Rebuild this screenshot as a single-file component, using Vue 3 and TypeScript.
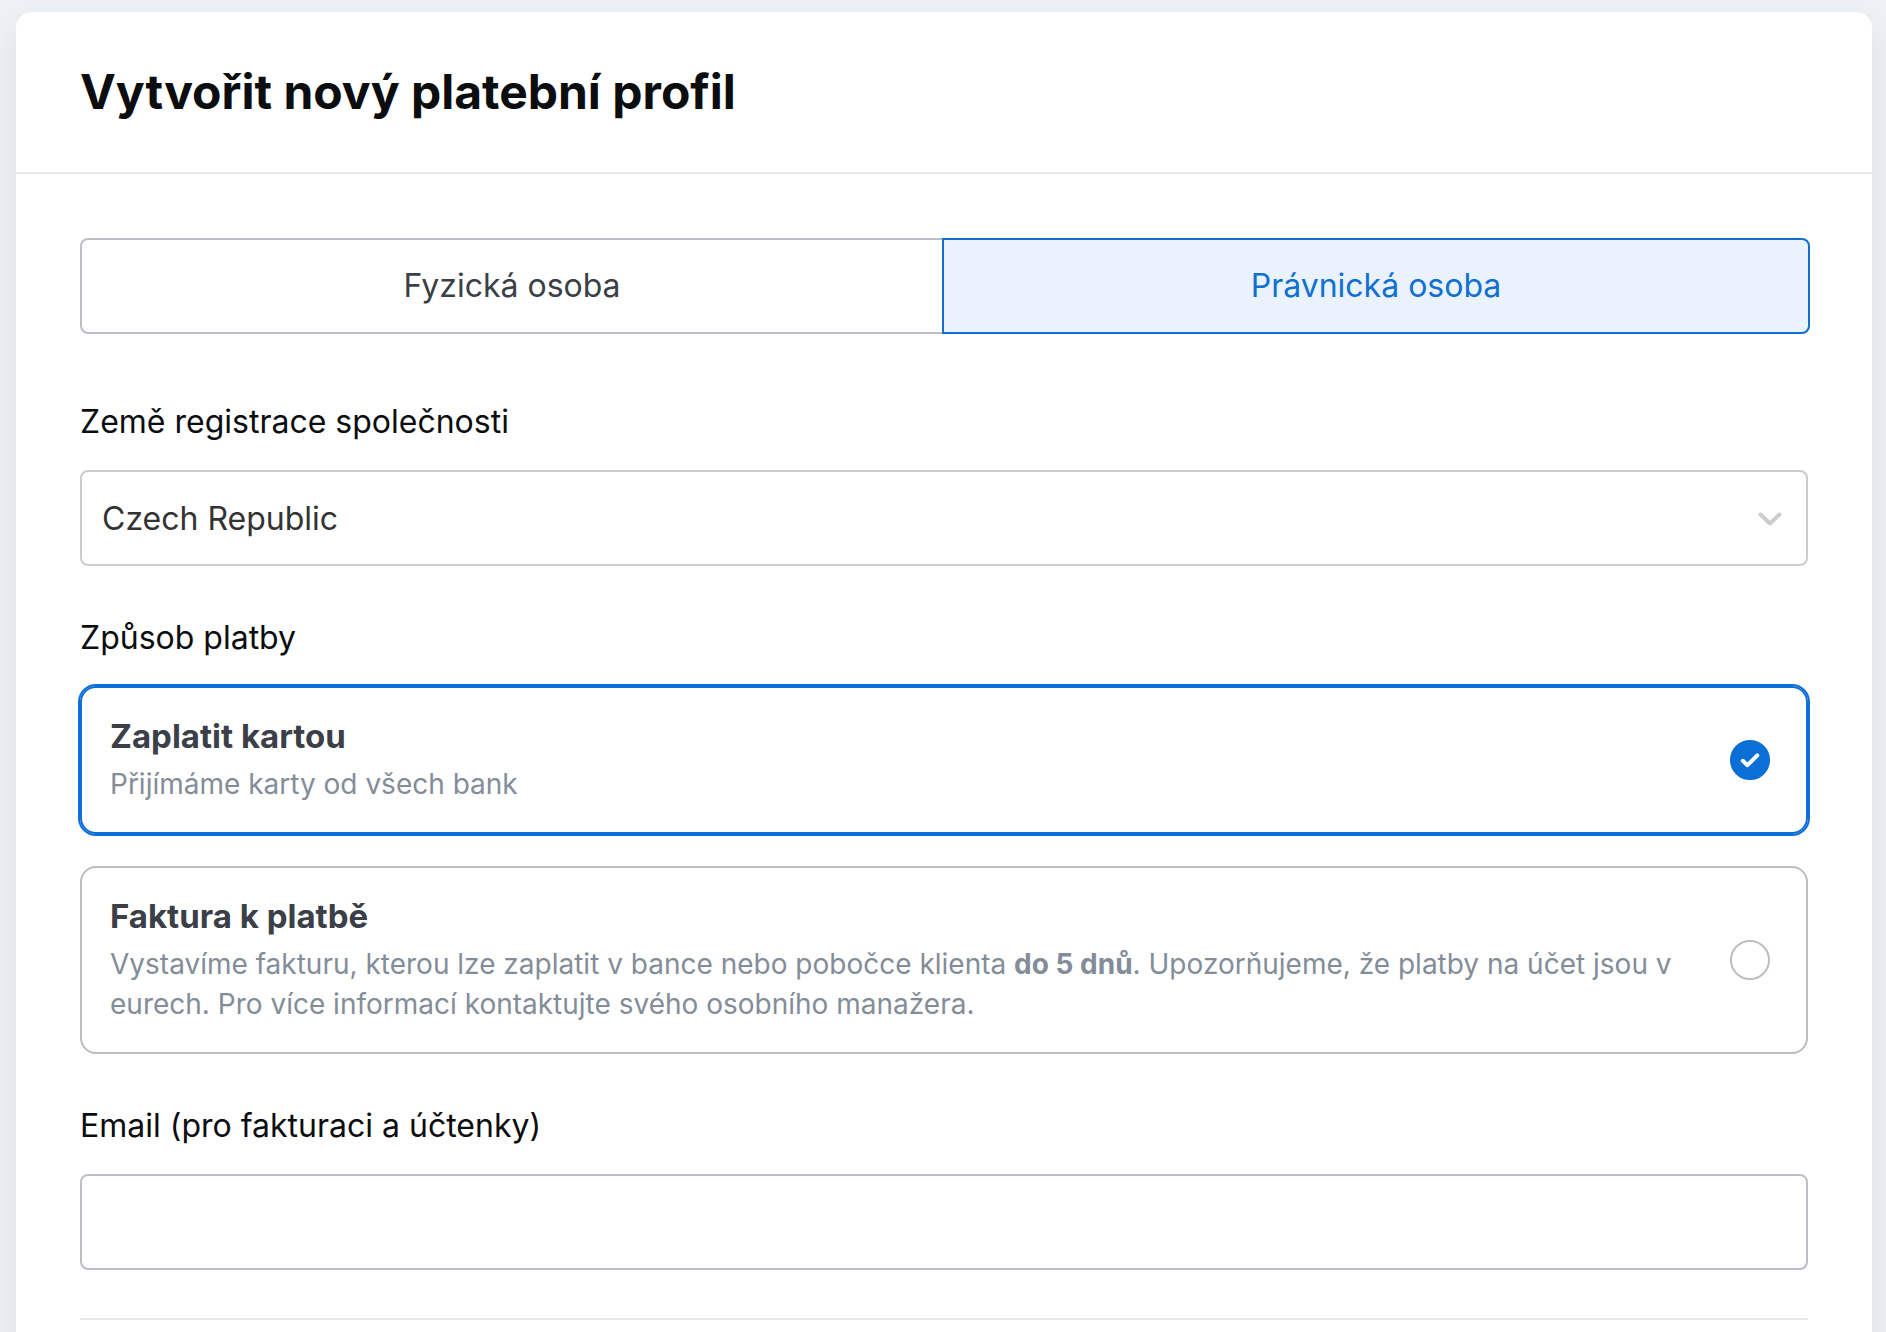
<script setup lang="ts">
import { ref } from 'vue'

type PersonType = 'individual' | 'company'
type PaymentMethod = 'card' | 'invoice'

const personTypes: { id: PersonType; label: string }[] = [
  { id: 'individual', label: 'Fyzická osoba' },
  { id: 'company', label: 'Právnická osoba' },
]

const personType = ref<PersonType>('company')
const country = ref('Czech Republic')
const method = ref<PaymentMethod>('card')
const email = ref('')
</script>

<template>
  <main class="page">
    <form class="panel" @submit.prevent>
      <header class="panel-header">
        <h1 class="title">Vytvořit nový platební profil</h1>
      </header>

      <div class="panel-body">
        <div class="tabs">
          <button
            v-for="type in personTypes"
            :key="type.id"
            type="button"
            class="tab"
            :class="{ active: personType === type.id }"
            :aria-pressed="personType === type.id"
            @click="personType = type.id"
          >
            {{ type.label }}
          </button>
        </div>

        <div class="field first">
          <label class="label" for="country">Země registrace společnosti</label>
          <div class="select-box">
            <select id="country" v-model="country" class="control select">
              <option>Czech Republic</option>
            </select>
            <svg class="chevron" viewBox="0 0 32 32" aria-hidden="true">
              <path d="M6.500 12.500l9.500 9 9.500-9" />
            </svg>
          </div>
        </div>

        <fieldset class="field">
          <legend class="label">Způsob platby</legend>
          <div class="options">
            <label class="option" :class="{ selected: method === 'card' }">
              <span class="option-text">
                <span class="option-name">Zaplatit kartou</span>
                <span class="option-note">Přijímáme karty od všech bank</span>
              </span>
              <span class="mark">
                <input v-model="method" class="radio" type="radio" name="method" value="card" />
                <svg v-if="method === 'card'" class="tick" viewBox="0 0 40 40" aria-hidden="true">
                  <path d="M12.800 20.800l4.700 4.400L27.300 15.400" />
                </svg>
              </span>
            </label>

            <label class="option" :class="{ selected: method === 'invoice' }">
              <span class="option-text">
                <span class="option-name">Faktura k platbě</span>
                <span class="option-note">
                  Vystavíme fakturu, kterou lze zaplatit v bance nebo pobočce klienta
                  <strong>do 5 dnů</strong>. Upozorňujeme, že platby na účet jsou v eurech. Pro více
                  informací kontaktujte svého osobního manažera.
                </span>
              </span>
              <span class="mark">
                <input v-model="method" class="radio" type="radio" name="method" value="invoice" />
                <svg v-if="method === 'invoice'" class="tick" viewBox="0 0 40 40" aria-hidden="true">
                  <path d="M12.800 20.800l4.700 4.400L27.300 15.400" />
                </svg>
              </span>
            </label>
          </div>
        </fieldset>

        <div class="field">
          <label class="label" for="email">Email (pro fakturaci a účtenky)</label>
          <input id="email" v-model="email" class="control" type="email" />
        </div>

        <hr class="divider" />
      </div>
    </form>
  </main>
</template>

<style>
body {
  margin: 0;
  background: #edf0f5;
}
</style>

<style scoped>
.page {
  box-sizing: border-box;
  display: flex;
  min-height: 100vh;
  padding: 12px 14px 0 16px;
  overflow: hidden;
  font-family: Inter, 'Liberation Sans', sans-serif;
  font-size: 32px;
  line-height: 48px;
  color: #0c0d0f;
}

.panel {
  flex: 1;
  min-width: 0;
  background: #fff;
  border-radius: 16px 16px 0 0;
  box-shadow: 0 16px 32px rgba(40, 20, 50, 0.08);
}

.panel-header {
  padding: 48px 64px;
  border-bottom: 2px solid #e8e8e8;
}

.title {
  margin: 0;
  font-size: 48px;
  font-weight: 700;
  line-height: 64px;
}

.panel-body {
  padding: 64px 64px 0;
}

.tabs {
  display: grid;
  grid-template-columns: 1fr 1fr;
}

.tab {
  height: 96px;
  padding: 0;
  border: 2px solid #bbbec2;
  background: #fff;
  color: #3b3f47;
  font: inherit;
}

.tab:first-child {
  border-radius: 8px 0 0 8px;
}

/* Neighbouring borders overlap, so the divider is a single line. */
.tab:last-child {
  margin: 0 -2px;
  border-radius: 0 8px 8px 0;
}

.tab.active {
  position: relative;
  border-color: #1070cc;
  background: #eaf2fe;
  color: #1070d2;
}

.field {
  min-width: 0;
  margin: 48px 0 0;
  padding: 0;
  border: 0;
}

.field.first {
  margin-top: 64px;
}

.label {
  display: block;
  margin-bottom: 24px;
  padding: 0;
}

.control {
  box-sizing: border-box;
  display: block;
  width: 100%;
  height: 96px;
  padding: 0 20px;
  border: 2px solid #bbbec2;
  border-radius: 8px;
  background: #fff;
  color: #333;
  font: inherit;
}

.select-box {
  display: grid;
  align-items: center;
}

.select,
.chevron {
  grid-area: 1 / 1;
}

.select {
  appearance: none;
  padding-top: 2px;
  border-color: #ccc;
}

.chevron {
  justify-self: end;
  width: 32px;
  height: 32px;
  margin-right: 22px;
  fill: none;
  stroke: #ccc;
  stroke-width: 4;
  stroke-linecap: round;
  stroke-linejoin: round;
  pointer-events: none;
}

.options {
  display: grid;
  gap: 32px;
}

.option {
  display: flex;
  align-items: center;
  gap: 48px;
  padding: 28px 36px 28px 28px;
  border: 2px solid #bbbec0;
  border-radius: 16px;
  cursor: pointer;
}

.option.selected {
  border-color: #0c6fd8;
  box-shadow: 0 0 0 2px #0c6fd8;
}

.option-text {
  flex: 1;
  display: grid;
  gap: 8px;
  line-height: 40px;
}

.option-name {
  color: #3b4048;
  font-size: 33px;
  font-weight: 700;
}

.option-note {
  color: #838d99;
  font-size: 28px;
}

.mark {
  display: grid;
  flex: none;
}

.radio,
.tick {
  grid-area: 1 / 1;
  width: 40px;
  height: 40px;
}

.radio {
  appearance: none;
  box-sizing: border-box;
  margin: 0;
  border: 2px solid #bbbec2;
  border-radius: 50%;
  background: #fff;
}

.radio:checked {
  border-color: #0c6fd8;
  background: #0c6fd8;
}

.tick {
  fill: none;
  stroke: #fff;
  stroke-width: 4;
  stroke-linecap: round;
  stroke-linejoin: round;
  pointer-events: none;
}

.divider {
  height: 2px;
  margin: 48px 0 0;
  border: 0;
  background: #e8e8e8;
}
</style>
